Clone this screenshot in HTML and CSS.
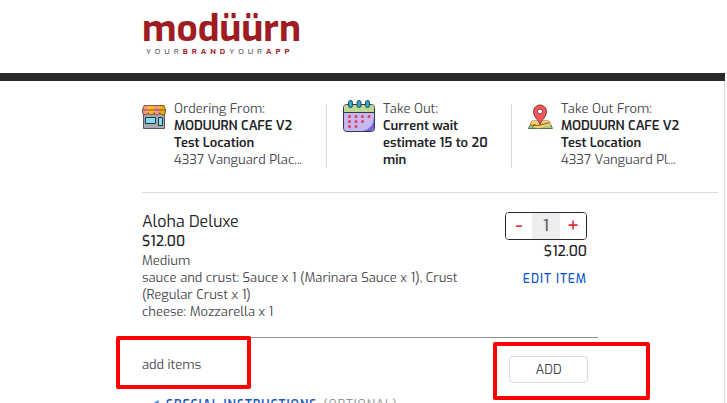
FILE: index.html
```html
<!DOCTYPE html>
<html lang="en">
<head>
<meta charset="utf-8">
<meta name="viewport" content="width=device-width, initial-scale=1">
<title>Moduurn order</title>
<link rel="stylesheet" href="styles.css">
</head>
<body>
<header class="header">
  <div class="logo">
    <p class="wordmark">modüürn</p>
    <p class="tagline">YOUR<b>BRAND</b>YOUR<b>APP</b></p>
  </div>
</header>
<main class="main">
  <section class="details">
    <div class="detail">
      <svg class="icon" width="24" height="26" viewBox="0 0 24 26" aria-hidden="true">
        <path d="M1.5 10h21v14.500h-21z" fill="#a9a9b2" stroke="#58585e"/>
        <path d="M3.500 13.500h10v6h-10zM16.500 13.500h4v8h-4z" fill="#82dcf2" stroke="#28333b"/>
        <path d="M2 1.500h5L5.500 7v4h-3L.5 9V6z" fill="#ff9478"/>
        <path d="M7 1.500h5V9l-2 2-3-.500L5.500 8z" fill="#ffbd22"/>
        <path d="M12 1.500h5L18.500 8 17 10.500l-3 .500-2-2z" fill="#ff9478"/>
        <path d="M17 1.500h5L23.500 6v3l-2 2h-3z" fill="#eab000"/>
        <path d="M2 1.500h20L23.500 6v2c0 3.500-5 3.500-5.750.500C17 11.500 12.500 11.500 12 8.500c-.500 3-5 3-5.750 0C5.500 11.500.5 11.500.5 8V6zM.5 6h23" fill="none" stroke="#5f3937" stroke-width=".8"/>
      </svg>
      <div>
        <p>Ordering From:</p>
        <p class="strong">MODUURN CAFE V2<br>Test Location</p>
        <p>4337 Vanguard Plac...</p>
      </div>
    </div>
    <div class="detail">
      <svg class="icon icon-raised" width="32" height="34" viewBox="0 0 32 34" aria-hidden="true">
        <rect x=".5" y="4.500" width="31" height="27" rx="3" fill="#c5b8f2" stroke="#34394b"/>
        <path d="M31 17v11q0 3-3 3h-8q11-3 11-14z" fill="#7468d8"/>
        <path d="M1 12V7q0-2 2-2h26q2 0 2 2v5z" fill="#bed895"/>
        <path d="M.5 12.500h31" stroke="#34394b"/>
        <g fill="#2fa9c5" stroke="#254955"><rect x="5.500" y=".5" width="4" height="7" rx="2"/><rect x="14" y=".5" width="4" height="7" rx="2"/><rect x="22.500" y=".5" width="4" height="7" rx="2"/></g>
        <path d="M6.500 16.500h.01m6.490 0h.01m6.490 0h.01m6.490 0h.01M6.500 21.500h.01m6.490 0h.01m6.490 0h.01M6.500 26.500h.01m6.490 0h.01" stroke="#e13d50" stroke-width="3" stroke-linecap="round"/>
      </svg>
      <div>
        <p>Take Out:</p>
        <p class="strong">Current wait<br>estimate 15 to 20<br>min</p>
      </div>
    </div>
    <div class="detail">
      <svg class="icon" width="25" height="26" viewBox="0 0 25 26" aria-hidden="true">
        <path d="m4 17-3.500 7.500h24L21 17z" fill="#a7cd8a" stroke="#56734a"/>
        <path d="m4 17-2 4 8 3.500 14-4L21 17z" fill="#ffca60"/>
        <path d="m2 21 8 .500 12-3M7 20l-3 4" fill="none" stroke="#756747"/>
        <path d="M12 20.500C10 15 5.500 13 5.500 7.500a6.500 6.500 0 0 1 13 0C18.500 13 14 15 12 20.500z" fill="#f75358" stroke="#763c40"/>
        <circle cx="12" cy="7.500" r="2.500" fill="#fff" stroke="#763c40"/>
      </svg>
      <div>
        <p>Take Out From:</p>
        <p class="strong">MODUURN CAFE V2<br>Test Location</p>
        <p>4337 Vanguard Pl...</p>
      </div>
    </div>
  </section>
  <section class="order">
    <article class="item">
      <div class="item-info">
        <h1>Aloha Deluxe</h1>
        <p class="price">$12.00</p>
        <p>Medium</p>
        <p>sauce and crust: Sauce x 1 (Marinara Sauce x 1), Crust<br>(Regular Crust x 1)</p>
        <p>cheese: Mozzarella x 1</p>
      </div>
      <div class="item-side">
        <div class="stepper">
          <button type="button" aria-label="Remove one">-</button>
          <input type="text" inputmode="numeric" value="1" aria-label="Quantity">
          <button type="button" aria-label="Add one">+</button>
        </div>
        <p class="price">$12.00</p>
        <a class="edit" href="#edit">EDIT ITEM</a>
      </div>
    </article>
    <div class="add-row">
      <p class="marked">add items<span class="mark mark-label"></span></p>
      <div class="marked">
        <button class="add" type="button">ADD</button>
        <span class="mark mark-button"></span>
      </div>
    </div>
    <a class="special" href="#instructions">
      <svg width="14" height="14" viewBox="0 0 14 14" aria-hidden="true"><path d="M13 1 1 8l4 1 1 4 2-3 3 1z" fill="#3f7fe0"/></svg>
      <strong>SPECIAL INSTRUCTIONS</strong>
      <span>(OPTIONAL)</span>
    </a>
  </section>
</main>
</body>
</html>
```
FILE: styles.css
```css
* {
  box-sizing: border-box;
}

body {
  display: flex;
  flex-direction: column;
  height: 100vh;
  margin: 0;
  overflow: hidden;
  background: #fff;
  color: #4a4a50;
  font: 13px/17px Exo, "Exo 2", Roboto, sans-serif;
}

p,
h1 {
  margin: 0;
}

button,
input {
  font: inherit;
}

.header {
  flex: none;
  margin-right: 2px;
  padding: 12px 0 16px 142px;
  border-bottom: 8px solid #29292b;
}

.logo {
  width: 166px;
}

.wordmark {
  color: #9f1c23;
  font-size: 37px;
  font-weight: 700;
  line-height: 34px;
}

.tagline {
  padding-left: 4px;
  color: #66666a;
  font-size: 8px;
  font-weight: 500;
  line-height: 11px;
  letter-spacing: 4px;
  white-space: nowrap;
}

.tagline b {
  color: #a52a31;
}

.main {
  flex: 1;
  min-height: 0;
  margin-right: 2px;
  padding: 19px 6px 0 142px;
  border-right: 1px solid #dcdcde;
}

.details {
  display: grid;
  grid-template-columns: 185px 185px 1fr;
  padding-bottom: 24px;
  border-bottom: 1px solid #d9d9db;
}

.detail {
  display: flex;
  gap: 8px;
  position: relative;
}

.detail + .detail {
  padding-left: 16px;
}

.detail + .detail::before {
  content: "";
  position: absolute;
  top: 4px;
  bottom: 0;
  left: -1px;
  width: 1px;
  background: #d9d9db;
}

.icon {
  flex: none;
  margin-top: 4px;
}

.icon-raised {
  margin-top: 0;
}

.strong {
  color: #222226;
  font-weight: 600;
}

.order {
  max-width: 456px;
}

.item {
  display: flex;
  justify-content: space-between;
  padding: 19px 11px 17px 0;
  border-bottom: 1px solid #919193;
}

h1,
.price {
  color: #222226;
  font-size: 16px;
  font-weight: 400;
  line-height: 20px;
}

.price {
  font-size: 14px;
  font-weight: 500;
}

.item-side {
  display: flex;
  flex-direction: column;
  align-items: flex-end;
}

.stepper {
  display: flex;
  width: 82px;
  height: 28px;
  margin-bottom: 2px;
  overflow: hidden;
  border: 1px solid #29292b;
  border-radius: 4px;
}

.stepper button,
.stepper input {
  width: 26px;
  padding: 0;
  border: 0;
  background: #fff;
  color: #dc343b;
  font-size: 20px;
  font-weight: 500;
  line-height: 20px;
  text-align: center;
}

.stepper input {
  width: 28px;
  background: #eeeef0;
  color: #606064;
  font-size: 16px;
}

.edit {
  margin-top: 9px;
  color: #0755c5;
  font-size: 12px;
  font-weight: 500;
  letter-spacing: 1px;
  text-decoration: none;
}

.add-row {
  display: flex;
  justify-content: space-between;
  align-items: flex-start;
  padding: 18px 10px 14px 0;
}

.marked {
  position: relative;
}

.add {
  display: block;
  width: 79px;
  height: 27px;
  padding: 0;
  border: 1px solid #dcdcde;
  border-radius: 4px;
  background: #fff;
  color: #4a4a50;
}

.mark {
  position: absolute;
  border: 4px solid #f00;
  border-radius: 2px;
  pointer-events: none;
}

.mark-label {
  top: -20px;
  left: -26px;
  width: 135px;
  height: 53px;
}

.mark-button {
  top: -14px;
  left: -16px;
  width: 157px;
  height: 58px;
}

.special {
  display: flex;
  align-items: center;
  gap: 6px;
  padding-left: 4px;
  color: #1b58bd;
  font-size: 12px;
  letter-spacing: 1px;
  text-decoration: none;
  white-space: nowrap;
}

.special strong {
  font-weight: 600;
}

.special span {
  color: #929296;
}
```
